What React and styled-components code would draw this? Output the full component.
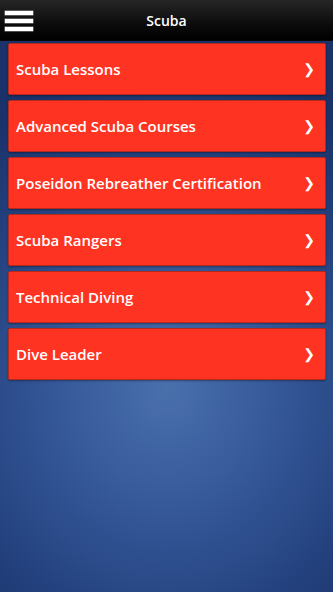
import React from 'react'
import styled, { createGlobalStyle } from 'styled-components'

const GlobalStyle = createGlobalStyle`
  html, body {
    margin: 0;
    padding: 0;
    height: 100%;
  }
  body {
    font-family: "Open Sans", "Noto Sans", sans-serif;
  }
  #root {
    height: 100%;
  }
`

const Page = styled.div`
  width: 333px;
  height: 592px;
  overflow: hidden;
  display: flex;
  flex-direction: column;
  background: radial-gradient(ellipse 300px 330px at 50% 66%, #4a70ac 0%, #36599a 35%, #24427f 70%, #1a3169 100%);
  background-color: #1a3169;
`

const Header = styled.header`
  height: 40px;
  flex-shrink: 0;
  display: flex;
  align-items: center;
  position: relative;
  background: linear-gradient(#262626, #0c0c0c 60%, #000);
  border-bottom: 1px solid #0a0a0a;
`

const MenuButton = styled.button`
  width: 38px;
  height: 40px;
  padding: 11px 0 0 5px;
  margin: 0;
  border: none;
  background: none;
  display: flex;
  flex-direction: column;
  gap: 4px;
`

const Bar = styled.span`
  display: block;
  width: 28px;
  height: 4px;
  background: #fff;
  box-shadow: 0 0 0 0.5px #999;
`

const Title = styled.h1`
  position: absolute;
  left: 0;
  right: 0;
  margin: 0;
  text-align: center;
  color: #fff;
  font-size: 14px;
  font-weight: 600;
  pointer-events: none;
`

const List = styled.ul`
  list-style: none;
  margin: 0;
  padding: 2px 7px 0 8px;
  display: flex;
  flex-direction: column;
  gap: 5px;
`

const Item = styled.li`
  height: 52px;
  box-sizing: border-box;
  display: flex;
  align-items: center;
  justify-content: space-between;
  padding: 0 10px 0 7px;
  background: #ff3322;
  border: 1px solid #b8281c;
  border-radius: 2px;
  box-shadow: 0 1px 2px rgba(0, 0, 0, 0.35);
  color: #fff;
  font-size: 15px;
  font-weight: 600;
`

const Chevron = styled.span`
  font-size: 14px;
  font-weight: 700;
  font-family: "DejaVu Sans", sans-serif;
`

const items = [
  'Scuba Lessons',
  'Advanced Scuba Courses',
  'Poseidon Rebreather Certification',
  'Scuba Rangers',
  'Technical Diving',
  'Dive Leader',
]

const App = () => {
  return (
    <Page>
      <GlobalStyle />
      <Header>
        <MenuButton aria-label="Menu">
          <Bar />
          <Bar />
          <Bar />
        </MenuButton>
        <Title>Scuba</Title>
      </Header>
      <List>
        {items.map((label) => (
          <Item key={label}>
            {label}
            <Chevron>❯</Chevron>
          </Item>
        ))}
      </List>
    </Page>
  )
}

export default App
